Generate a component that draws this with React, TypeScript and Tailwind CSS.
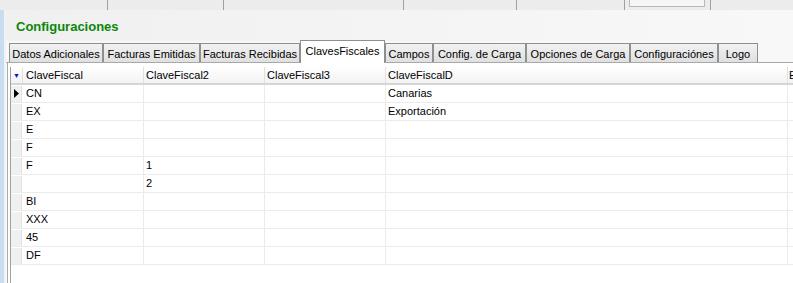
import React from "react";

const TABS = [
  { label: "Datos Adicionales", w: 94 },
  { label: "Facturas Emitidas", w: 97 },
  { label: "Facturas Recibidas", w: 100 },
  { label: "ClavesFiscales", w: 85, active: true },
  { label: "Campos", w: 48 },
  { label: "Config. de Carga", w: 93 },
  { label: "Opciones de Carga", w: 104 },
  { label: "Configuraciónes", w: 88 },
  { label: "Logo", w: 40 },
];

const ROWS: [string, string, string, string][] = [
  ["CN", "", "", "Canarias"],
  ["EX", "", "", "Exportación"],
  ["E", "", "", ""],
  ["F", "", "", ""],
  ["F", "1", "", ""],
  ["", "2", "", ""],
  ["BI", "", "", ""],
  ["XXX", "", "", ""],
  ["45", "", "", ""],
  ["DF", "", "", ""],
];

export default function App() {
  return (
    <div className="w-[793px] h-[283px] overflow-hidden bg-[#fcfcfc] flex flex-col font-['Liberation_Sans',Arial,sans-serif] text-[11px] text-black">
      {/* strip of the window above */}
      <div className="h-[10px] flex bg-[#ececec] shrink-0">
        <div className="w-[108px] shrink-0 border-r border-[#a0a0a0]" />
        <div className="w-[116px] shrink-0 border-r border-[#a0a0a0]" />
        <div className="w-[180px] shrink-0 border-r border-[#a0a0a0]" />
        <div className="w-[113px] shrink-0 border-r border-[#a0a0a0]" />
        <div className="w-[108px] shrink-0 border-r border-[#a0a0a0]" />
        <div className="w-[86px] shrink-0 pl-[4px] border-r border-[#a0a0a0]">
          <div className="h-[7px] w-[76px] bg-[#f6f6f6] border border-t-0 border-[#b8b8b8]" />
        </div>
      </div>

      <div className="flex-1 flex min-h-0">
        <div className="w-[4px] shrink-0 bg-[#c9dcf0]" />
        <div className="w-[2px] shrink-0 bg-[#eef3f8]" />
        <div className="flex-1 min-w-0 flex flex-col">
          <div className="h-[31px] shrink-0 bg-[linear-gradient(90deg,#f0f0f0,#f8f8f8)] flex items-center pl-[10px] pt-[3px]">
            <span className="text-[13px] font-bold text-[#0a870a]">Configuraciones</span>
          </div>

          {/* tabs */}
          <div className="h-[22px] shrink-0 bg-[#f8f8f8] flex items-end pl-[3px] border-b border-[#a9a9a9]">
            {TABS.map((t) =>
              t.active ? (
                <div
                  key={t.label}
                  style={{ width: t.w }}
                  className="h-[23px] shrink-0 -mb-[1px] bg-white border border-b-0 border-[#8e8f8f] flex items-start pt-[2px] justify-center"
                >
                  {t.label}
                </div>
              ) : (
                <div
                  key={t.label}
                  style={{ width: t.w }}
                  className="h-[19px] shrink-0 bg-[linear-gradient(#f2f2f2,#e0e0e0)] border border-b-0 border-[#8e8f8f] flex items-center justify-center pt-[2px]"
                >
                  {t.label}
                </div>
              )
            )}
          </div>

          {/* tab panel */}
          <div className="flex-1 bg-white border-l border-[#a9a9a9] ml-[1px] pl-[2px] pt-[4px]">
            <div className="border-l border-[#a0a0a0] h-full">
              <div className="flex h-[18px] bg-[linear-gradient(#ffffff,#f3f3f3)] border-b-2 border-[#d5d5d5]">
                <div className="w-[12px] shrink-0 flex items-center justify-center border-r border-[#e0e0e0]">
                  <span className="text-[#1010d0] text-[7px] leading-none">▼</span>
                </div>
                <div className="w-[121px] shrink-0 pl-[3px] flex items-center border-r border-[#e0e0e0]">ClaveFiscal</div>
                <div className="w-[121px] shrink-0 pl-[2px] flex items-center border-r border-[#e0e0e0]">ClaveFiscal2</div>
                <div className="w-[121px] shrink-0 pl-[2px] flex items-center border-r border-[#e0e0e0]">ClaveFiscal3</div>
                <div className="w-[402px] shrink-0 pl-[2px] flex items-center border-r border-[#e0e0e0]">ClaveFiscalD</div>
                <div className="flex-1 min-w-0 overflow-hidden pl-[1px] flex items-center">E</div>
              </div>
              {ROWS.map((r, i) => (
                <div key={i} className="flex h-[18px] border-b border-[#ebebeb]">
                  <div className="w-[12px] shrink-0 flex items-center">
                    <div className="w-[11px] h-[16px] bg-[#f0f0f0] border-r border-[#e2e2e2] flex items-center justify-center">
                      {i === 0 && (
                        <svg width="5" height="9" viewBox="0 0 5 9">
                          <path d="M0 0 L5 4.5 L0 9 Z" fill="#000" />
                        </svg>
                      )}
                    </div>
                  </div>
                  <div className="w-[121px] shrink-0 pl-[3px] flex items-center border-r border-[#ebebeb]">{r[0]}</div>
                  <div className="w-[121px] shrink-0 pl-[2px] flex items-center border-r border-[#ebebeb]">{r[1]}</div>
                  <div className="w-[121px] shrink-0 pl-[2px] flex items-center border-r border-[#ebebeb]">{r[2]}</div>
                  <div className="w-[402px] shrink-0 pl-[2px] flex items-center border-r border-[#ebebeb]">{r[3]}</div>
                  <div className="flex-1" />
                </div>
              ))}
            </div>
          </div>
        </div>
      </div>
    </div>
  );
}
